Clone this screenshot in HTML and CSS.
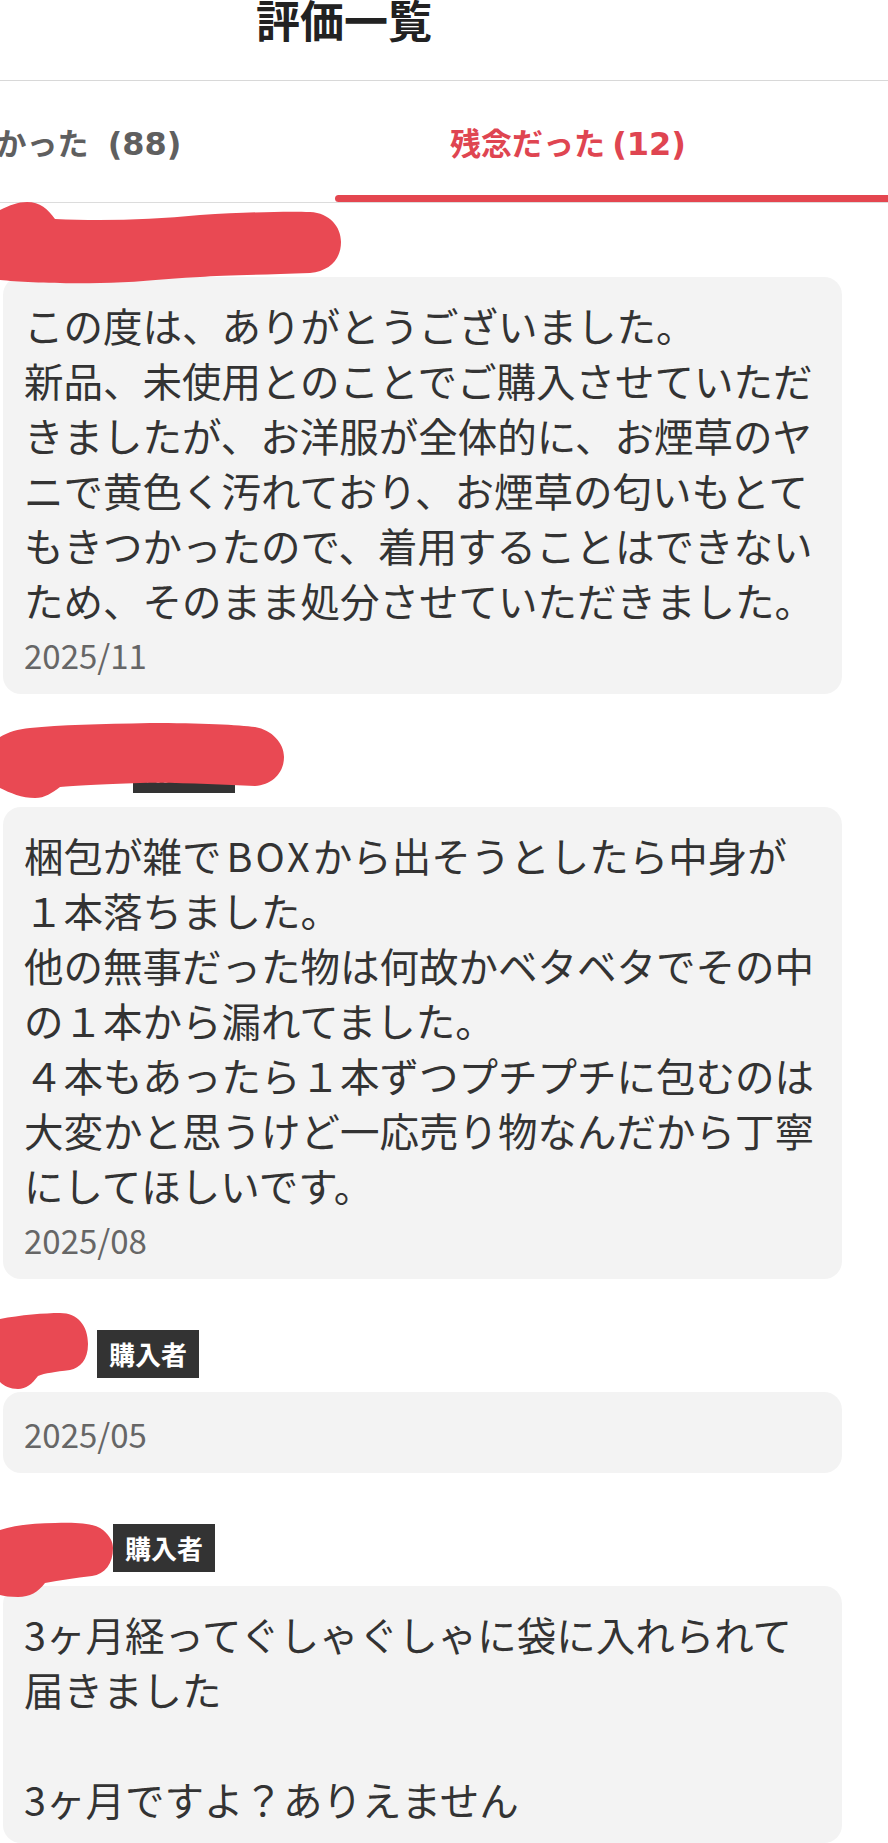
FILE: index.html
```html
<html>

<head>

    <meta name="viewport" content="width=device-width, initial-scale=1.0">

    <title>評価一覧</title>

    <link rel="stylesheet" href="styles.css">

</head>

<body>

    <div class="header">
        <h1>評価一覧</h1>
    </div>

    <div class="tabs">
        <div class="tab">良かった <span class="count">(88)</span></div>
        <div class="tab active">残念だった <span class="count">(12)</span></div>
    </div>

    <div class="list">

        <div class="review">
            <div class="reviewer">
                <span class="name" style="width:190px"></span>
                <span class="badge">購入者</span>
                <svg class="scribble" width="360" height="90" viewBox="0 -20 360 90">
                    <path d="M0,-1 C10,-6 18,-9 27,-9 C40,-9 48,-2 55,8 C100,10 150,9 200,4 C250,1 290,0 310,1 C330,2 341,16 341,31 C341,48 330,60 310,62 C260,64 220,64 200,66 C160,68 130,72 100,72 C60,73 20,71 0,69 Z"/>
                </svg>
            </div>
            <div class="card">
                <p class="text">この度は、ありがとうございました。
新品、未使用とのことでご購入させていただきましたが、お洋服が全体的に、お煙草のヤニで黄色く汚れており、お煙草の匂いもとてもきつかったので、着用することはできないため、そのまま処分させていただきました。</p>
                <div class="date">2025/11</div>
            </div>
        </div>

        <div class="review">
            <div class="reviewer">
                <span class="name" style="width:118px"></span>
                <span class="badge">購入者</span>
                <svg class="scribble" width="300" height="90" viewBox="0 -20 300 90">
                    <path d="M0,-4 C8,-9 18,-12 30,-13 C60,-16 100,-17 150,-18 C200,-18 240,-16 255,-14 C272,-11 284,2 284,16 C284,32 272,44 255,45 C220,44 180,41 140,42 C100,43 75,45 60,46 C52,52 45,57 35,57 C22,57 10,52 0,47 Z"/>
                </svg>
            </div>
            <div class="card">
                <p class="text">梱包が雑で<span class="latin">BOX</span>から出そうとしたら中身が１本落ちました。
他の無事だった物は何故かベタベタでその中の１本から漏れてました。
４本もあったら１本ずつプチプチに包むのは大変かと思うけど一応売り物なんだから丁寧にしてほしいです。</p>
                <div class="date">2025/08</div>
            </div>
        </div>

        <div class="review">
            <div class="reviewer">
                <span class="name" style="width:82px"></span>
                <span class="badge">購入者</span>
                <svg class="scribble" width="120" height="90" viewBox="0 -20 120 90">
                    <path d="M0,-7 C20,-11 45,-13 60,-13 C78,-13 88,0 88,18 C88,34 80,42 70,44 C55,46 45,47 38,50 C32,58 26,63 18,63 C10,63 4,60 0,56 Z"/>
                </svg>
            </div>
            <div class="card">
                <div class="date">2025/05</div>
            </div>
        </div>

        <div class="review">
            <div class="reviewer">
                <span class="name" style="width:98px"></span>
                <span class="badge">購入者</span>
                <svg class="scribble" width="130" height="100" viewBox="0 -20 130 100">
                    <path d="M0,10 C15,5 35,3 55,3 C75,2 95,3 103,10 C110,16 113,22 113,28 C113,44 105,54 92,56 C75,58 60,60 45,63 C38,72 30,77 18,77 C10,77 4,76 0,75 Z"/>
                </svg>
            </div>
            <div class="card">
                <p class="text">3ヶ月経ってぐしゃぐしゃに袋に入れられて届きました

3ヶ月ですよ？ありえません</p>
            </div>
        </div>

    </div>

</body>

</html>
```

FILE: styles.css
```css
body {
    font-family: "Noto Sans CJK JP", "Noto Sans", sans-serif;
    background-color: #ffffff;
    color: #333;
    margin: 0;
    padding: 0;
    overflow-x: hidden;
}

.header {
    height: 80px;
    display: flex;
    justify-content: center;
    padding-right: 200px;
    border-bottom: 1px solid #d8d8d8;
}

h1 {
    margin: -3px 0 0 0;
    font-size: 44px;
    line-height: 44px;
    font-weight: 700;
    color: #222;
}

.tabs {
    display: flex;
    margin-left: -168px;
    border-bottom: 1px solid #dcdcdc;
    width: 1100px;
}

.tab {
    flex: 0 0 482px;
    height: 121px;
    line-height: 121px;
    text-align: center;
    font-size: 31px;
    font-weight: 700;
    color: #5f5f5f;
    position: relative;
}

.count {
    font-family: "DejaVu Sans", sans-serif;
    font-size: 32px;
}

.tab:first-child .count {
    margin-left: 12px;
}

.tab.active {
    flex-basis: 508px;
    color: #df4551;
}

.tab.active::after {
    content: "";
    position: absolute;
    left: 21px;
    right: -80px;
    bottom: 0;
    height: 7px;
    border-radius: 4px;
    background-color: #e4464f;
}

.list {
    padding: 8px 46px 0 3px;
}

.review + .review {
    margin-top: 47px;
}

.reviewer {
    position: relative;
    height: 56px;
    display: flex;
    align-items: center;
    gap: 12px;
    margin-bottom: 10px;
}

.badge {
    height: 48px;
    line-height: 48px;
    padding: 0 12px;
    background-color: #333;
    color: #fff;
    font-size: 26px;
    font-weight: 700;
}

.scribble {
    position: absolute;
    left: -3px;
    top: -20px;
    overflow: visible;
}

.scribble path {
    fill: #e94953;
}

.card {
    background-color: #f3f3f3;
    border-radius: 18px;
    padding: 20px 23px 17px 21px;
}

.text {
    margin: 0;
    font-size: 39.5px;
    line-height: 55px;
    white-space: pre-wrap;
    color: #333;
}

.latin {
    letter-spacing: 3px;
    padding-left: 5px;
}

.date {
    font-size: 33px;
    line-height: 44px;
    color: #666;
}

.text + .date {
    margin-top: 6px;
}
```
